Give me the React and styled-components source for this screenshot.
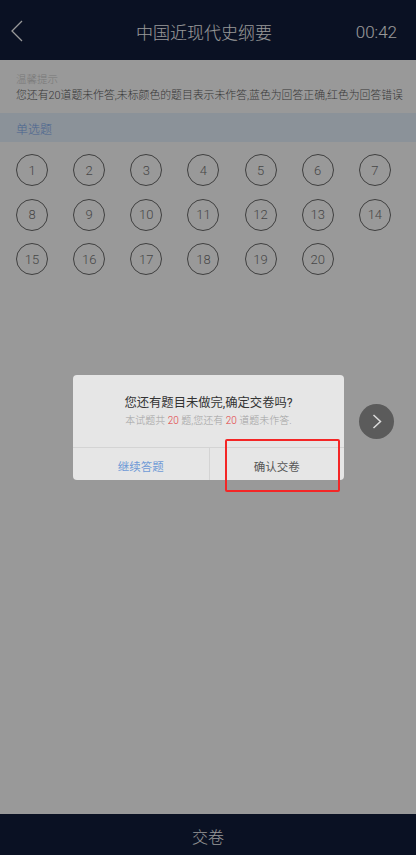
import React from "react";
import styled, { createGlobalStyle } from "styled-components";

const GlobalStyle = createGlobalStyle`
  html, body {
    margin: 0;
    padding: 0;
    background: #fff;
  }
  body {
    font-family: Roboto, "Noto Sans CJK SC", sans-serif;
  }
  #root {
    width: 416px;
    height: 855px;
  }
`;

const Page = styled.div`
  position: relative;
  display: flex;
  flex-direction: column;
  width: 416px;
  height: 855px;
  overflow: hidden;
  background: #fff;
`;

const Header = styled.header`
  display: grid;
  grid-template-columns: 80px 1fr 80px;
  align-items: center;
  height: 60px;
  padding: 0 19px 0 11px;
  box-sizing: border-box;
  background: #111d3b;
  color: #fff;
`;

const BackButton = styled.div`
  display: flex;
  align-items: center;
  height: 60px;
  margin-top: 1px;
`;

const Title = styled.h1`
  margin: 0;
  text-align: center;
  font-size: 17px;
  font-weight: 300;
  margin-top: 2px;
`;

const Timer = styled.div`
  text-align: right;
  font-size: 17px;
  font-weight: 300;
  margin-top: 3px;
`;

const Notice = styled.section`
  padding: 12px 16px 9px;
  font-size: 10.85px;
  line-height: 16px;
  font-weight: 300;
`;

const NoticeLabel = styled.div`
  color: #cbcbcb;
  font-size: 10.5px;
`;

const NoticeText = styled.div`
  color: #5e5e5e;
  white-space: nowrap;
`;

const SectionHead = styled.div`
  height: 29px;
  padding: 2px 16px 0;
  box-sizing: border-box;
  display: flex;
  align-items: center;
  background: #e8f3ff;
  color: #7aaaf0;
  font-size: 12px;
  font-weight: 300;
`;

const Grid = styled.div`
  display: grid;
  grid-template-columns: repeat(7, 1fr);
  row-gap: 12.5px;
  padding: 12px 0 0 16px;
`;

const Bubble = styled.div`
  display: flex;
  align-items: center;
  justify-content: center;
  width: 32px;
  height: 32px;
  box-sizing: border-box;
  border: 1px solid #6a6a6a;
  border-radius: 50%;
  color: #767676;
  font-size: 13px;
  font-weight: 300;
`;

const Spacer = styled.div`
  flex: 1;
`;

const SubmitBar = styled.footer`
  height: 41px;
  display: flex;
  align-items: center;
  justify-content: center;
  background: #111d3b;
  color: #fff;
  font-size: 16px;
  font-weight: 300;
  padding-top: 2px;
  box-sizing: border-box;
`;

const Dim = styled.div`
  position: absolute;
  inset: 0;
  background: rgba(0, 0, 0, 0.4);
  display: flex;
  align-items: center;
  justify-content: center;
`;

const NextButton = styled.div`
  position: absolute;
  top: 404px;
  right: 22px;
  width: 35px;
  height: 35px;
  border-radius: 50%;
  background: #5b5b5b;
  display: flex;
  align-items: center;
  justify-content: center;
`;

const Dialog = styled.div`
  position: relative;
  width: 271px;
  background: #e6e6e6;
  border-radius: 4px;
  margin-left: 1px;
`;

const DialogBody = styled.div`
  padding: 19px 10px 19px;
  text-align: center;
  border-bottom: 1px solid #d4d4d4;
`;

const DialogTitle = styled.div`
  font-size: 12.3px;
  line-height: 18px;
  color: #333;
  font-weight: 400;
`;

const DialogSub = styled.div`
  margin-top: 2px;
  font-size: 10px;
  line-height: 14px;
  color: #a2a2a2;
  white-space: nowrap;
  font-weight: 300;
`;

const Red = styled.span`
  color: #e23b3b;
`;

const Actions = styled.div`
  display: grid;
  grid-template-columns: 1fr 1fr;
  height: 32px;
`;

const Action = styled.div`
  display: flex;
  align-items: center;
  justify-content: center;
  font-size: 11.5px;
  padding-top: 3px;
  color: ${p => (p.$primary ? "#6f9ad6" : "#555")};
  & + & {
    border-left: 1px solid #d4d4d4;
  }
`;

const Highlight = styled.div`
  position: absolute;
  left: 152px;
  top: 64px;
  width: 115px;
  height: 53px;
  box-sizing: border-box;
  border: 2.5px solid #f42626;
  border-radius: 2px;
  pointer-events: none;
`;

const numbers = Array.from({ length: 20 }, (_, i) => i + 1);

export default function App() {
  return (
    <>
      <GlobalStyle />
      <Page>
        <Header>
          <BackButton>
            <svg width="12" height="22" viewBox="0 0 12 22">
              <polyline
                points="11,1 1,11 11,21"
                fill="none"
                stroke="#fff"
                strokeWidth="1.3"
              />
            </svg>
          </BackButton>
          <Title>中国近现代史纲要</Title>
          <Timer>00:42</Timer>
        </Header>

        <Notice>
          <NoticeLabel>温馨提示</NoticeLabel>
          <NoticeText>
            您还有20道题未作答,未标颜色的题目表示未作答,蓝色为回答正确,红色为回答错误
          </NoticeText>
        </Notice>

        <SectionHead>单选题</SectionHead>

        <Grid>
          {numbers.map(n => (
            <Bubble key={n}>{n}</Bubble>
          ))}
        </Grid>

        <Spacer />
        <SubmitBar>交卷</SubmitBar>

        <Dim>
          <Dialog>
            <DialogBody>
              <DialogTitle>您还有题目未做完,确定交卷吗?</DialogTitle>
              <DialogSub>
                本试题共 <Red>20</Red> 题,您还有 <Red>20</Red> 道题未作答.
              </DialogSub>
            </DialogBody>
            <Actions>
              <Action $primary>继续答题</Action>
              <Action>确认交卷</Action>
            </Actions>
            <Highlight />
          </Dialog>
        </Dim>

        <NextButton>
          <svg width="10" height="15" viewBox="0 0 10 15">
            <polyline
              points="1.5,1 8.5,7.5 1.5,14"
              fill="none"
              stroke="#dcdcdc"
              strokeWidth="1.5"
            />
          </svg>
        </NextButton>
      </Page>
    </>
  );
}
